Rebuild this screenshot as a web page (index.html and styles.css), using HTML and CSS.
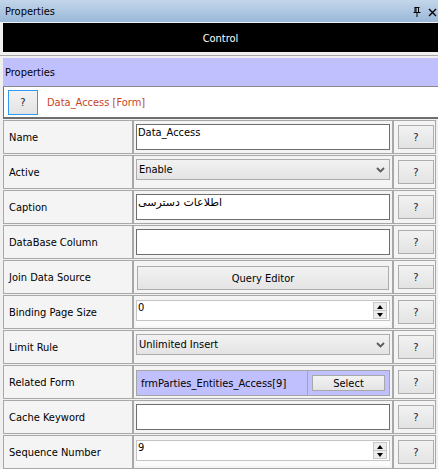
FILE: index.html
```html
<!DOCTYPE html>
<html>
<head>
<meta charset="utf-8">
<link rel="stylesheet" href="styles.css">
</head>
<body>
<div class="titlebar">
  <span class="title">Properties</span>
  <span class="tb-icons">
    <svg class="pin" width="8" height="10" viewBox="0 0 8 10"><path d="M1.5 0.5h5 M2 0.5v5 M3 0.5v5 M5.5 0.5v5 M0.5 5.5h7 M4 5.5v4.5" stroke="#000" stroke-width="1" fill="none"/></svg>
    <svg class="close" width="9" height="9" viewBox="0 0 9 9"><path d="M1 1L8 8M8 1L1 8" stroke="#000" stroke-width="1.4" fill="none"/></svg>
  </span>
</div>
<div class="control-wrap"><div class="control">Control</div></div>
<div class="sep"></div>
<div class="panel">
  <div class="panel-head">Properties</div>
  <div class="info-row"><span class="qbtn focus">?</span><span class="info-text">Data_Access [Form]</span></div>
  <table class="props">
    <colgroup><col class="c-label"><col class="c-value"><col class="c-help"></colgroup>
    <tr>
      <td class="lbl">Name</td>
      <td class="val"><div class="tbox">Data_Access</div></td>
      <td class="hlp"><span class="qbtn">?</span></td>
    </tr>
    <tr>
      <td class="lbl">Active</td>
      <td class="val"><div class="sel"><span>Enable</span><svg class="chev" width="9" height="6" viewBox="0 0 9 6"><path d="M1 1l3.5 3.5L8 1" stroke="#5a5a5a" stroke-width="1.8" fill="none"/></svg></div></td>
      <td class="hlp"><span class="qbtn">?</span></td>
    </tr>
    <tr>
      <td class="lbl">Caption</td>
      <td class="val"><div class="tbox"><span class="fa">اطلاعات دسترسی</span></div></td>
      <td class="hlp"><span class="qbtn">?</span></td>
    </tr>
    <tr>
      <td class="lbl">DataBase Column</td>
      <td class="val"><div class="tbox"></div></td>
      <td class="hlp"><span class="qbtn">?</span></td>
    </tr>
    <tr>
      <td class="lbl">Join Data Source</td>
      <td class="val"><div class="wbtn">Query Editor</div></td>
      <td class="hlp"><span class="qbtn">?</span></td>
    </tr>
    <tr>
      <td class="lbl">Binding Page Size</td>
      <td class="val"><div class="numwrap"><div class="num"><span class="num-text">0</span><span class="spin"><span class="up"></span><span class="down"></span></span></div></div></td>
      <td class="hlp"><span class="qbtn">?</span></td>
    </tr>
    <tr>
      <td class="lbl">Limit Rule</td>
      <td class="val"><div class="sel"><span>Unlimited Insert</span><svg class="chev" width="9" height="6" viewBox="0 0 9 6"><path d="M1 1l3.5 3.5L8 1" stroke="#5a5a5a" stroke-width="1.8" fill="none"/></svg></div></td>
      <td class="hlp"><span class="qbtn">?</span></td>
    </tr>
    <tr>
      <td class="lbl">Related Form</td>
      <td class="val"><div class="rel"><span class="rel-text">frmParties_Entities_Access[9]</span><span class="rel-act"><span class="sbtn">Select</span></span></div></td>
      <td class="hlp"><span class="qbtn">?</span></td>
    </tr>
    <tr>
      <td class="lbl">Cache Keyword</td>
      <td class="val"><div class="tbox"></div></td>
      <td class="hlp"><span class="qbtn">?</span></td>
    </tr>
    <tr>
      <td class="lbl">Sequence Number</td>
      <td class="val"><div class="numwrap"><div class="num"><span class="num-text">9</span><span class="spin"><span class="up"></span><span class="down"></span></span></div></div></td>
      <td class="hlp"><span class="qbtn">?</span></td>
    </tr>
  </table>
</div>
</body>
</html>
```
FILE: styles.css
```css
* { box-sizing: border-box; }
html, body { margin: 0; padding: 0; }
body {
  width: 438px;
  height: 469px;
  overflow: hidden;
  background: #f0f0f0;
  font-family: "DejaVu Sans Condensed", "DejaVu Sans", sans-serif;
  font-size: 11px;
  color: #000;
}
.titlebar {
  height: 22px;
  background: linear-gradient(#c3d6ea, #9ab8d8);
  display: flex;
  align-items: center;
  justify-content: space-between;
  padding: 0 1px 0 5px;
}
.tb-icons { display: flex; align-items: center; gap: 7px; padding-top: 2px; }
.control-wrap { padding: 1px 0 0 3px; }
.control {
  height: 29px;
  background: #000;
  color: #fff;
  display: flex;
  align-items: center;
  justify-content: center;
  padding-top: 1px;
}
.sep {
  margin-top: 3px;
  height: 3px;
  border-top: 1px solid #a8a8a8;
}
.panel { margin-left: 3px; }
.panel-head {
  height: 29px;
  background: #c0c0ff;
  border-bottom: 1px solid #8a8a8a;
  display: flex;
  align-items: center;
  padding-left: 2px;
}
.info-row {
  height: 32px;
  background: #fff;
  border-left: 1px solid #6e6e6e;
  border-bottom: 2px solid #6e6e6e;
  display: flex;
  align-items: center;
  padding-left: 4px;
}
.info-text { color: #c8461e; margin-left: 9px; }
.qbtn {
  display: flex;
  align-items: center;
  justify-content: center;
  width: 36px;
  height: 24px;
  border: 1px solid #adadad;
  background: linear-gradient(#f2f2f2, #e3e3e3);
  color: #1a1a3a;
  font-size: 11px;
}
.qbtn.focus {
  width: 30px;
  height: 25px;
  border-color: #3399ee;
  margin-top: 1px;
}
.props {
  width: 433px;
  table-layout: fixed;
  border-collapse: separate;
  border-spacing: 0 1px;
}
.c-label { width: 130px; }
.c-value { width: 260px; }
.c-help { width: 43px; }
.props tr { height: 34px; }
.props td {
  border: 1px solid #a8a8a8;
  background: #f4f4f4;
  padding: 0;
}
.props td.lbl { padding-left: 5px; vertical-align: middle; white-space: nowrap; }
.props td.val { padding: 3px 2px 0 2px; vertical-align: top; }
.props td.hlp { padding: 4px 0 0 4px; vertical-align: top; }
.tbox {
  height: 26px;
  background: #fff;
  border: 1px solid #6e6e6e;
  padding: 1px 1px;
  line-height: 13px;
}
.fa { font-family: "DejaVu Sans", sans-serif; font-size: 11px; }
.sel {
  height: 21px;
  border: 1px solid #acacac;
  background: linear-gradient(#f2f2f2, #e4e4e4);
  display: flex;
  align-items: center;
  justify-content: space-between;
  padding: 0 4px 0 2px;
}
.wbtn {
  margin: 2px 1px 0 1px;
  height: 24px;
  border: 1px solid #acacac;
  background: linear-gradient(#f2f2f2, #e4e4e4);
  display: flex;
  align-items: center;
  justify-content: center;
}
.numwrap {
  height: 26px;
  background: #fbfbfb;
  margin-top: 1px;
}
.num {
  height: 21px;
  background: #fff;
  border: 1px solid #c4c4c4;
  display: flex;
  align-items: flex-start;
  justify-content: space-between;
  padding: 0 2px 0 1px;
}
.num-text { line-height: 14px; }
.spin {
  margin-top: 1px;
  width: 14px;
  height: 17px;
  display: flex;
  flex-direction: column;
  border: 1px solid #c8c8c8;
  background: #ececec;
}
.spin .up, .spin .down {
  flex: 1;
  display: flex;
  align-items: center;
  justify-content: center;
}
.spin .up { border-bottom: 1px solid #c8c8c8; }
.spin .up::before {
  content: "";
  border-left: 3.5px solid transparent;
  border-right: 3.5px solid transparent;
  border-bottom: 4px solid #000;
}
.spin .down::before {
  content: "";
  border-left: 3.5px solid transparent;
  border-right: 3.5px solid transparent;
  border-top: 4px solid #000;
}
.rel {
  margin-top: 1px;
  height: 26px;
  background: #c0c0ff;
  border: 1px solid #a4a4a4;
  display: flex;
  align-items: center;
}
.rel-text { flex: 1; padding-left: 4px; white-space: nowrap; }
.rel-act {
  height: 100%;
  border-left: 1px solid #a4a4a4;
  display: flex;
  align-items: center;
  padding: 0 4px 0 4px;
}
.sbtn {
  width: 73px;
  height: 16px;
  border: 1px solid #a8a8a8;
  background: linear-gradient(#f2f2f2, #e4e4e4);
  display: flex;
  align-items: center;
  justify-content: center;
}
```
